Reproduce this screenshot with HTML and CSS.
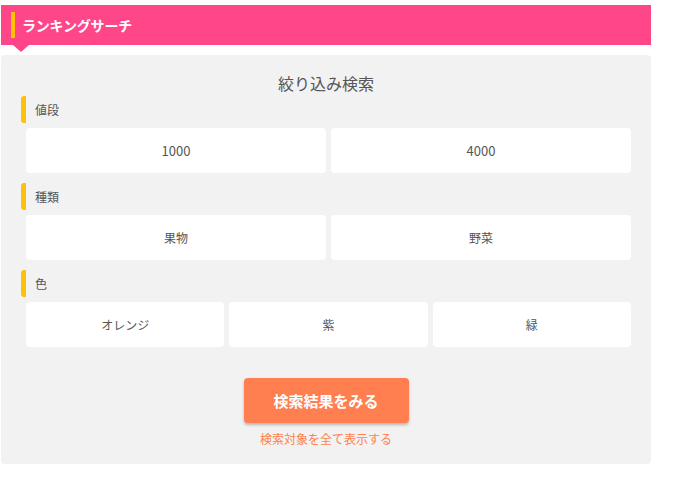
FILE: index.html
```html
<!DOCTYPE html>
<html lang="ja">
<head>
<meta charset="utf-8">
<link rel="stylesheet" href="styles.css">
</head>
<body>
<div class="wrap">
  <div class="head"><span class="head-bar"></span><span class="head-text">ランキングサーチ</span></div>
  <div class="panel">
    <div class="title">絞り込み検索</div>
    <div class="label">値段</div>
    <div class="row">
      <div class="box num">1000</div>
      <div class="box num">4000</div>
    </div>
    <div class="label">種類</div>
    <div class="row">
      <div class="box">果物</div>
      <div class="box">野菜</div>
    </div>
    <div class="label">色</div>
    <div class="row">
      <div class="box">オレンジ</div>
      <div class="box">紫</div>
      <div class="box">緑</div>
    </div>
    <div class="actions">
      <div class="btn">検索結果をみる</div>
      <div class="link">検索対象を全て表示する</div>
    </div>
  </div>
</div>
</body>
</html>
```
FILE: styles.css
```css
html, body {
  margin: 0;
  padding: 0;
  background: #ffffff;
}
body {
  font-family: "Noto Sans CJK JP", "Noto Sans", sans-serif;
  color: #555555;
}
.wrap {
  width: 650px;
  margin: 5px 0 0 1px;
}
.head {
  position: relative;
  height: 40px;
  background: #ff4689;
  display: flex;
  align-items: center;
  padding-left: 10px;
}
.head-bar {
  width: 4px;
  height: 26px;
  background: #ffc107;
  margin-right: 7px;
}
.head-text {
  color: #ffffff;
  font-weight: bold;
  font-size: 14px;
  letter-spacing: -0.2px;
}
.head::after {
  content: "";
  position: absolute;
  left: 12px;
  bottom: -7px;
  border-left: 8px solid transparent;
  border-right: 8px solid transparent;
  border-top: 7px solid #ff4689;
}
.panel {
  margin-top: 10px;
  background: #f2f2f2;
  border-radius: 4px;
  padding: 16px 20px 16px 20px;
}
.title {
  text-align: center;
  font-size: 16px;
  line-height: 24px;
  color: #555555;
}
.label {
  margin-top: 10px;
  height: 27px;
  line-height: 27px;
  border-left: 5px solid #ffc107;
  border-radius: 3px;
  padding-left: 9px;
  font-size: 12px;
  color: #555555;
}
.title + .label {
  margin-top: 1px;
}
.row {
  display: flex;
  gap: 5px;
  margin: 5px 0 0 5px;
}
.box {
  flex: 1;
  height: 45px;
  background: #ffffff;
  border-radius: 4px;
  display: flex;
  align-items: center;
  justify-content: center;
  font-size: 12px;
  color: #555555;
}
.box.num {
  font-size: 13px;
}
.actions {
  margin-top: 31px;
  display: flex;
  flex-direction: column;
  align-items: center;
}
.btn {
  width: 165px;
  height: 45px;
  background: #ff7f50;
  border-radius: 4px;
  box-shadow: 0 2px 3px rgba(0, 0, 0, 0.25);
  color: #ffffff;
  font-weight: bold;
  font-size: 15px;
  display: flex;
  align-items: center;
  justify-content: center;
}
.link {
  margin-top: 7px;
  font-size: 12px;
  line-height: 18px;
  color: #ff7f50;
}
```
